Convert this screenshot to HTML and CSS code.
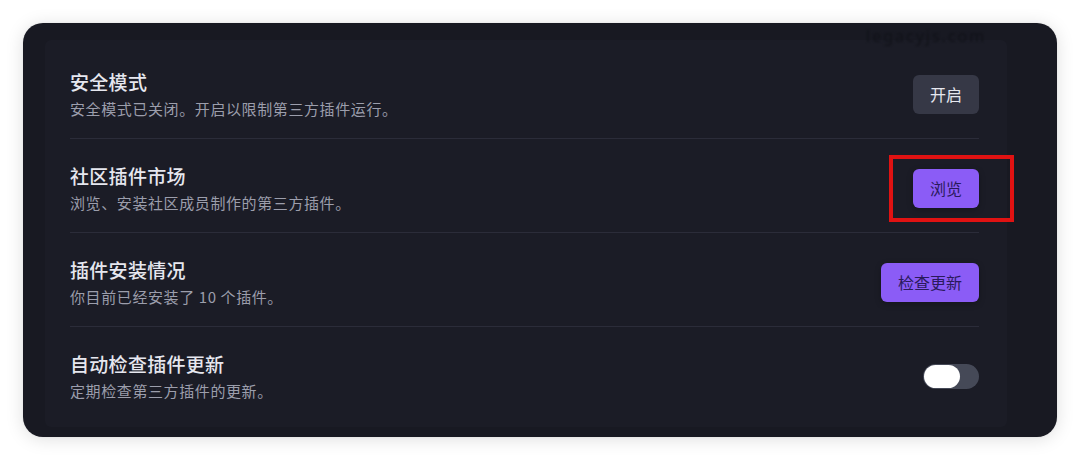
FILE: index.html
```html
<!DOCTYPE html>
<html lang="zh-CN">
<head>
<meta charset="utf-8">
<title>插件设置</title>
<link rel="stylesheet" href="styles.css">
</head>
<body>
<div class="page">
  <div class="card">
    <span class="watermark">legacyjs.com</span>
    <div class="panel">
      <div class="row">
        <div class="text">
          <div class="title">安全模式</div>
          <div class="desc">安全模式已关闭。开启以限制第三方插件运行。</div>
        </div>
        <button class="btn btn-gray">开启</button>
      </div>
      <div class="row">
        <div class="text">
          <div class="title">社区插件市场</div>
          <div class="desc">浏览、安装社区成员制作的第三方插件。</div>
        </div>
        <div class="highlight-wrap">
          <button class="btn btn-purple">浏览</button>
          <span class="highlight"></span>
        </div>
      </div>
      <div class="row">
        <div class="text">
          <div class="title">插件安装情况</div>
          <div class="desc">你目前已经安装了 10 个插件。</div>
        </div>
        <button class="btn btn-purple">检查更新</button>
      </div>
      <div class="row row-last">
        <div class="text">
          <div class="title">自动检查插件更新</div>
          <div class="desc">定期检查第三方插件的更新。</div>
        </div>
        <div class="toggle"><span class="knob"></span></div>
      </div>
    </div>
  </div>
</div>
</body>
</html>
```

FILE: styles.css
```css
* { box-sizing: border-box; }
html, body {
  margin: 0;
  padding: 0;
  background: #ffffff;
}
body {
  font-family: "Noto Sans CJK SC", "Noto Sans", sans-serif;
}
.page {
  padding: 23px 23px 24px 23px;
}
.card {
  position: relative;
  width: 1034px;
  height: 414px;
  background: #181922;
  border-radius: 20px;
  padding: 17px 50px 10px 22px;
  box-shadow: 0 2px 18px rgba(0, 0, 0, 0.13), 0 0 2px rgba(0, 0, 0, 0.08);
}
.watermark {
  position: absolute;
  left: 843px;
  top: 2px;
  font-family: "Noto Sans", sans-serif;
  font-size: 16px;
  letter-spacing: 2px;
  color: #111219;
  filter: blur(1px);
}
.panel {
  height: 100%;
  background: #1b1c26;
  border-radius: 6px;
  padding: 5px 28px 6px 25px;
  display: flex;
  flex-direction: column;
}
.row {
  display: flex;
  align-items: center;
  justify-content: space-between;
  padding: 24px 0 19px 0;
  border-bottom: 1px solid #2b2c39;
}
.row-last {
  border-bottom: none;
}
.text {
  display: flex;
  flex-direction: column;
  gap: 4px;
}
.title {
  font-size: 19px;
  line-height: 26px;
  font-weight: 500;
  letter-spacing: 0.3px;
  color: #e6e7ef;
}
.desc {
  font-size: 15px;
  line-height: 20px;
  letter-spacing: 0.6px;
  color: #9c9eac;
}
.btn {
  height: 39px;
  padding: 0 17px;
  border: none;
  border-radius: 6px;
  font-family: "Noto Sans CJK SC", "Noto Sans", sans-serif;
  font-size: 16px;
  line-height: 39px;
  cursor: pointer;
}
.btn-gray {
  background: #363846;
  color: #e6e7ef;
}
.btn-purple {
  background: #8b5cf6;
  color: #2a1a5c;
  box-shadow: 0 2px 6px rgba(0, 0, 0, 0.25);
}
.highlight-wrap {
  position: relative;
  display: flex;
}
.highlight {
  position: absolute;
  left: -24px;
  right: -35px;
  top: -14px;
  bottom: -14px;
  border: 4px solid #e01212;
  pointer-events: none;
}
.toggle {
  width: 56px;
  height: 25px;
  border-radius: 13px;
  background: #454957;
  display: flex;
  align-items: center;
  padding: 0 1px;
}
.knob {
  width: 36px;
  height: 23px;
  border-radius: 12px;
  background: #ffffff;
}
```
